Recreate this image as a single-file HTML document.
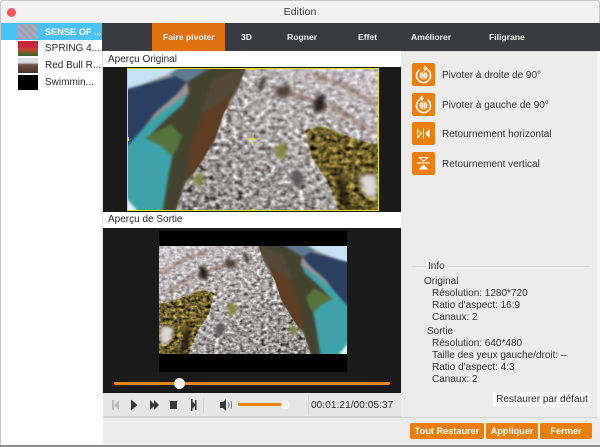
<!DOCTYPE html>
<html lang="fr">
<head>
<meta charset="utf-8">
<title>Edition</title>
<style>
html,body{margin:0;padding:0;background:#fff}
#w{position:relative;width:600px;height:447px;overflow:hidden;background:#ececec;font-family:"Liberation Sans",sans-serif;font-size:10px;color:#2a2a2a}
#w div,#w svg{position:absolute;box-sizing:border-box}
.t{white-space:nowrap;line-height:12px}
.tab{color:#f2f2f2;font-weight:bold;font-size:8.6px;top:31px}
.side{font-size:10px;left:45px}
.ib{left:412px;width:23px;height:23px;background:#ec7f0c;border-radius:2px}
.il{left:442px;font-size:10px;color:#333}
.inf{font-size:10px;color:#333}
.ob{top:423px;height:16px;background:#ec7f0c;border-radius:2px;color:#fff;font-weight:bold;font-size:9.2px;text-align:center;line-height:16px}
</style>
</head>
<body>
<div id="w">
<svg width="0" height="0" style="left:0;top:0">
<defs>
<linearGradient id="rg" x1="1" y1="0" x2="0.2" y2="1">
<stop offset="0" stop-color="#cfcacf"/>
<stop offset=".4" stop-color="#b4aeae"/>
<stop offset="1" stop-color="#8f8b8b"/>
</linearGradient>
<filter id="rock" x="0" y="0" width="100%" height="100%" color-interpolation-filters="sRGB">
<feTurbulence type="fractalNoise" baseFrequency="0.18 0.24" numOctaves="4" seed="7"/>
<feColorMatrix type="matrix" values="1.1 1.1 0 0 -.6 1.1 1.1 0 0 -.6 1.1 1.1 0 0 -.6 0 0 0 0 1"/>
<feComposite in2="SourceAlpha" operator="in" result="n"/>
<feBlend in="n" in2="SourceGraphic" mode="overlay"/>
<feGaussianBlur stdDeviation=".4"/>
</filter>
<filter id="soft" color-interpolation-filters="sRGB"><feGaussianBlur stdDeviation="1.3"/></filter>
<filter id="soft2" color-interpolation-filters="sRGB"><feGaussianBlur stdDeviation="2"/></filter>
<clipPath id="clip"><rect width="252" height="143"/></clipPath>
<g id="scene" clip-path="url(#clip)">
<rect width="252" height="143" fill="#9a9490"/>
<g filter="url(#soft)">
<polygon points="-4,-4 60,-4 42,6 -4,24" fill="#c6e2f2"/>
<polygon points="42,6 58,-4 95,-4 70,12 60,14" fill="#5d7a92"/>
<polygon points="-4,22 48,8 60,14 50,26 28,45 8,72 -4,82" fill="#2a3f62"/>
<polygon points="60,14 90,-4 124,-4 108,25 95,45 85,72 72,95 58,115 48,147 32,147 46,85 22,68 38,52 56,35 62,24" fill="#44432f"/>
<polygon points="-4,82 6,72 20,56 40,40 58,28 62,24 56,36 38,52 22,68 46,85 42,105 35,147 -4,147" fill="#3ea2aa"/>
<polygon points="18,70 44,56 55,68 50,82 45,88 33,77" fill="#56733e"/>
<polygon points="-4,126 14,147 -4,147" fill="#e2f2f2"/>
<polygon points="78,42 105,20 100,48 86,78 74,102 60,112 62,80" fill="#5e3d22"/>
<polygon points="85,12 118,-2 112,20 88,38 74,45" fill="#54483a"/>
</g>
<polygon points="120,-4 256,-4 256,147 47,147 58,118 72,98 88,72 97,45 110,25" fill="url(#rg)" filter="url(#rock)"/>
<polygon points="178,62 196,58 225,70 256,78 256,147 214,147 200,112 185,90" fill="#6e5f2c" filter="url(#rock)"/>
<g filter="url(#soft2)">
<path d="M150 22c30 8 60 15 90 40M185 8c25 4 50 20 65 30" stroke="#8f6d5e" stroke-width="3" fill="none"/>
<polygon points="190,28 198,26 197,42 188,46 186,36" fill="#26211f"/>
<polygon points="148,20 165,16 162,28 150,30" fill="#4e3f32"/>
<polygon points="136,8 130,22 134,24 139,10" fill="#26211f"/>
<polygon points="148,78 160,74 157,92 150,90" fill="#85853a"/>
<polygon points="68,108 78,104 74,118 66,116" fill="#7d8a3a"/>
<polygon points="232,108 250,106 250,130 238,128" fill="#dcd8d6"/>
<polygon points="212,100 218,120 224,143 218,143 210,118" fill="#221c0e"/>
<polygon points="170,98 178,112 170,122 163,110" fill="#5c5a5c"/>
</g>
</g>
</defs>
</svg>

<!-- title bar -->
<div style="left:0;top:0;width:600px;height:23px;background:#f2f2f2;border:1px solid #c8c8c8;border-bottom:0;border-radius:4px 4px 0 0"></div>
<div style="left:7px;top:8px;width:9px;height:9px;border-radius:50%;background:#f9565a"></div>
<div class="t" style="left:0;top:6px;width:600px;text-align:center;font-size:10.5px;letter-spacing:.1px;color:#333">Edition</div>

<!-- sidebar -->
<div style="left:1px;top:23px;width:102px;height:422px;background:#fff"></div>
<div style="left:1px;top:23px;width:102px;height:17px;background:#4cc1f6"></div>
<div style="left:18px;top:24px;width:20px;height:15px;background:repeating-linear-gradient(45deg,#a79fbd 0 2px,#8fa8b6 2px 4px,#b9a9b9 4px 5px)"></div>
<div style="left:18px;top:41px;width:20px;height:15px;background:linear-gradient(180deg,#c5263a 0 35%,#c8452a 55%,#2e6a2c 100%)"></div>
<div style="left:18px;top:58px;width:20px;height:15px;background:linear-gradient(180deg,#d5dee6 0 30%,#6b5345 45%,#4a3228 100%)"></div>
<div style="left:18px;top:75px;width:20px;height:15px;background:#000"></div>
<div class="t side" style="top:26px;color:#fff;font-weight:bold;font-size:9.2px">SENSE OF ...</div>
<div class="t side" style="top:43px">SPRING 4...</div>
<div class="t side" style="top:60px">Red Bull R...</div>
<div class="t side" style="top:77px">Swimmin...</div>

<!-- tabs -->
<div style="left:102px;top:23px;width:498px;height:28px;background:#3a3b40"></div>
<div style="left:152px;top:23px;width:73px;height:28px;background:#e1700f"></div>
<div class="t tab" style="left:163px">Faire pivoter</div>
<div class="t tab" style="left:241px">3D</div>
<div class="t tab" style="left:287px">Rogner</div>
<div class="t tab" style="left:358px">Effet</div>
<div class="t tab" style="left:411px">Améliorer</div>
<div class="t tab" style="left:489px">Filigrane</div>

<!-- previews -->
<div style="left:102px;top:51px;width:299px;height:343px;background:#fff;border-left:1px solid #ddd"></div>
<div class="t" style="left:108px;top:54px">Aperçu Original</div>
<div style="left:103px;top:67px;width:298px;height:145px;background:#1a1a1a"></div>
<svg style="left:127px;top:68px" width="252" height="143" viewBox="0 0 252 143"><use href="#scene"/>
<rect x=".5" y=".5" width="251" height="142" fill="none" stroke="#e4e000" stroke-width="1"/>
<path d="M120 71h12M126 65v12" stroke="#e6de1c" stroke-width="1" fill="none"/>
<rect x="124" y="-1" width="4" height="3" fill="#e4e000"/><rect x="124" y="141" width="4" height="3" fill="#e4e000"/>
<rect x="-1" y="69" width="3" height="4" fill="#e4e000"/><rect x="250" y="69" width="3" height="4" fill="#e4e000"/>
</svg>
<div class="t" style="left:108px;top:214px">Aperçu de Sortie</div>
<div style="left:103px;top:228px;width:298px;height:165px;background:#1a1a1a"></div>
<div style="left:159px;top:231px;width:188px;height:141px;background:#000"></div>
<svg style="left:159px;top:246px" width="188" height="108" viewBox="0 0 252 143" preserveAspectRatio="none"><g transform="translate(252 0) scale(-1 1)"><use href="#scene"/></g></svg>
<div style="left:114px;top:382px;width:276px;height:3px;background:#ee8510;border-radius:2px"></div>
<div style="left:174px;top:378px;width:11px;height:11px;border-radius:50%;background:#f4f4f4"></div>

<!-- controls -->
<div style="left:103px;top:393px;width:298px;height:24px;background:#e6e6e6;border-bottom:1px solid #d0d0d0"></div>
<svg style="left:103px;top:394px" width="210" height="22" viewBox="0 0 210 22">
<g fill="#b9b9b9"><rect x="9" y="6" width="2" height="10"/><path d="M16 6v10l-5-5z"/></g>
<g fill="#3a3a3a"><path d="M28 5.500l6.500 5.500-6.500 5.500z"/>
<path d="M47 6l5 5-5 5zM51 6l5 5-5 5z"/>
<rect x="67" y="7" width="7" height="8"/>
<path d="M88 6l5 5-5 5z"/><rect x="88" y="5" width="1.500" height="12"/><rect x="92" y="6" width="1.500" height="10"/>
<path d="M117 8h3l3-3v12l-3-3h-3z"/></g>
<path d="M125 8q2 3 0 6M128 7q1 4 0 8" stroke="#777" fill="none"/>
<path d="M100.500 4v15M205.500 1v20" stroke="#d2d2d2"/>
</svg>
<div style="left:238px;top:403px;width:45px;height:3px;background:#ee8510"></div>
<div style="left:281px;top:400px;width:9px;height:9px;border-radius:50%;background:#f6f6f6"></div>
<div class="t" style="left:311px;top:400px;letter-spacing:.1px">00:01:21/00:05:37</div>

<!-- right panel -->
<div style="left:401px;top:51px;width:199px;height:366px;background:#ececec;border-top:1px solid #ddd;border-right:3px solid #f6f6f6"></div>
<div class="ib" style="top:63px"></div>
<svg style="left:412px;top:63px" width="23" height="23" viewBox="0 0 23 23"><path d="M7.500 6.800a7 7 0 1 0 8 0" fill="none" stroke="#fff" stroke-width="1.600"/><path d="M11 5.500h4M12.500 3l2.500 2.500-2.500 2" stroke="#fff" stroke-width="1.300" fill="none"/><circle cx="11.500" cy="12.500" r="4.500" fill="#f3b06a"/><text x="11.500" y="15" font-size="7" font-weight="bold" text-anchor="middle" fill="#fff" font-family="Liberation Sans">90</text></svg>
<div class="ib" style="top:93px"></div>
<svg style="left:412px;top:93px" width="23" height="23" viewBox="0 0 23 23"><path d="M15.500 6.800a7 7 0 1 1-8 0" fill="none" stroke="#fff" stroke-width="1.600"/><path d="M12 5.500H8M10.500 3L8 5.500l2.500 2" stroke="#fff" stroke-width="1.300" fill="none"/><circle cx="11.500" cy="12.500" r="4.500" fill="#f3b06a"/><text x="11.500" y="15" font-size="7" font-weight="bold" text-anchor="middle" fill="#fff" font-family="Liberation Sans">90</text></svg>
<div class="ib" style="top:122px"></div>
<svg style="left:412px;top:122px" width="23" height="23" viewBox="0 0 23 23"><path d="M5.500 7.500v8l4-4z" fill="none" stroke="#fff"/><path d="M11.500 6v11" stroke="#fff"/><path d="M17.500 7v9l-4.500-4.500z" fill="#fff"/></svg>
<div class="ib" style="top:152px"></div>
<svg style="left:412px;top:152px" width="23" height="23" viewBox="0 0 23 23"><path d="M7.500 5.500h8l-4 4z" fill="none" stroke="#fff"/><path d="M5 11h13" stroke="#fff"/><path d="M6.500 17.500h10l-5-5z" fill="#fff"/></svg>
<div class="t il" style="top:70px">Pivoter à droite de 90°</div>
<div class="t il" style="top:100px">Pivoter à gauche de 90°</div>
<div class="t il" style="top:129px">Retournement horizontal</div>
<div class="t il" style="top:159px">Retournement vertical</div>

<div style="left:412px;top:266px;width:178px;height:1px;background:#d8d8d8"></div>
<div class="t inf" style="left:426px;top:261px;background:#ececec;padding:0 2px">Info</div>
<div class="t inf" style="left:424px;top:276px">Original</div>
<div class="t inf" style="left:432px;top:288px">Résolution: 1280*720</div>
<div class="t inf" style="left:432px;top:300px">Ratio d'aspect: 16:9</div>
<div class="t inf" style="left:432px;top:312px">Canaux: 2</div>
<div class="t inf" style="left:427px;top:326px">Sortie</div>
<div class="t inf" style="left:432px;top:338px">Résolution: 640*480</div>
<div class="t inf" style="left:432px;top:350px">Taille des yeux gauche/droit: –</div>
<div class="t inf" style="left:432px;top:362px">Ratio d'aspect: 4:3</div>
<div class="t inf" style="left:432px;top:374px">Canaux: 2</div>
<div class="t" style="left:493px;top:392px;width:98px;height:15px;background:#f8f8f8;border-radius:2px;text-align:center;line-height:16px;color:#333">Restaurer par défaut</div>

<!-- bottom -->
<div style="left:103px;top:417px;width:494px;height:1px;background:#d4d4d4"></div>
<div class="ob" style="left:410px;width:74px">Tout Restaurer</div>
<div class="ob" style="left:486px;width:52px">Appliquer</div>
<div class="ob" style="left:540px;width:52px">Fermer</div>
<div style="left:0;top:445px;width:600px;height:2px;background:#8c8c8c"></div>
<div style="left:0;top:23px;width:1px;height:422px;background:#c8c8c8"></div>
</div>
</body>
</html>
